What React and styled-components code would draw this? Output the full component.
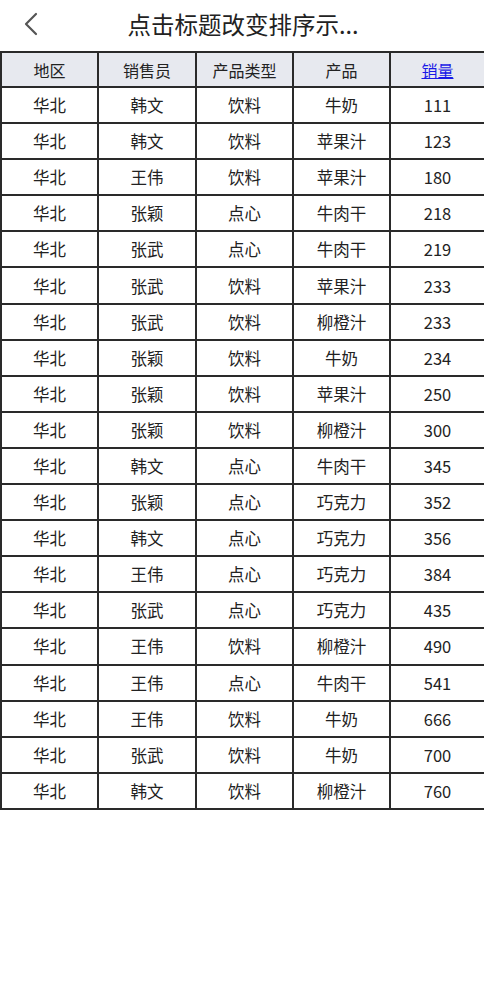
import React, { useState } from "react";
import styled, { createGlobalStyle } from "styled-components";

const GlobalStyle = createGlobalStyle`
  body {
    margin: 0;
    background: #fff;
    font-family: "Noto Sans CJK SC", "Noto Sans", sans-serif;
    color: #222;
  }
`;

const Page = styled.div`
  width: 484px;
  min-height: 1004px;
  background: #fff;
`;

const NavBar = styled.div`
  height: 51px;
  display: flex;
  align-items: center;
  position: relative;
`;

const BackButton = styled.button`
  position: absolute;
  left: 18px;
  top: 10px;
  width: 26px;
  height: 28px;
  border: none;
  background: none;
  padding: 0;
  display: flex;
  align-items: center;
  justify-content: center;
  cursor: pointer;
`;

const Title = styled.div`
  flex: 1;
  text-align: center;
  font-size: 23.5px;
  line-height: 30px;
  margin-top: -3px;
  padding-left: 2px;
  color: #222;
`;

const Table = styled.table`
  width: 100%;
  border-collapse: collapse;
  table-layout: fixed;
  border: 2px solid #2a2a2a;
`;

const Col = styled.col`
  width: ${(p) => p.$w}px;
`;

const HeadCell = styled.th`
  background: #e7e9ef;
  border: 2px solid #2a2a2a;
  height: 33px;
  padding: 0;
  font-size: 16px;
  font-weight: normal;
  color: ${(p) => (p.$active ? "#1a1ae6" : "#222")};
  text-decoration: ${(p) => (p.$active ? "underline" : "none")};
  cursor: pointer;
`;

const Cell = styled.td`
  border: 2px solid #2a2a2a;
  height: 34.1px;
  padding: 0;
  text-align: center;
  font-size: 16.5px;
  color: #222;
`;

const columns = [
  { key: "region", label: "地区", width: 97 },
  { key: "seller", label: "销售员", width: 98 },
  { key: "type", label: "产品类型", width: 97 },
  { key: "product", label: "产品", width: 97 },
  { key: "sales", label: "销量", width: 95 },
];

const rows = [
  ["华北", "韩文", "饮料", "牛奶", 111],
  ["华北", "韩文", "饮料", "苹果汁", 123],
  ["华北", "王伟", "饮料", "苹果汁", 180],
  ["华北", "张颖", "点心", "牛肉干", 218],
  ["华北", "张武", "点心", "牛肉干", 219],
  ["华北", "张武", "饮料", "苹果汁", 233],
  ["华北", "张武", "饮料", "柳橙汁", 233],
  ["华北", "张颖", "饮料", "牛奶", 234],
  ["华北", "张颖", "饮料", "苹果汁", 250],
  ["华北", "张颖", "饮料", "柳橙汁", 300],
  ["华北", "韩文", "点心", "牛肉干", 345],
  ["华北", "张颖", "点心", "巧克力", 352],
  ["华北", "韩文", "点心", "巧克力", 356],
  ["华北", "王伟", "点心", "巧克力", 384],
  ["华北", "张武", "点心", "巧克力", 435],
  ["华北", "王伟", "饮料", "柳橙汁", 490],
  ["华北", "王伟", "点心", "牛肉干", 541],
  ["华北", "王伟", "饮料", "牛奶", 666],
  ["华北", "张武", "饮料", "牛奶", 700],
  ["华北", "韩文", "饮料", "柳橙汁", 760],
];

const App = () => {
  const [sortCol, setSortCol] = useState(4);

  const sorted = [...rows].sort((a, b) => {
    const x = a[sortCol];
    const y = b[sortCol];
    if (typeof x === "number") return x - y;
    return String(x).localeCompare(String(y), "zh");
  });

  return (
    <Page>
      <GlobalStyle />
      <NavBar>
        <BackButton aria-label="返回">
          <svg width="16" height="24" viewBox="0 0 16 24" fill="none">
            <path d="M13 2 L3 12 L13 22" stroke="#555" strokeWidth="2.2" strokeLinecap="round" strokeLinejoin="round" />
          </svg>
        </BackButton>
        <Title>点击标题改变排序示...</Title>
      </NavBar>
      <Table>
        <colgroup>
          {columns.map((c) => (
            <Col key={c.key} $w={c.width} />
          ))}
        </colgroup>
        <thead>
          <tr>
            {columns.map((c, i) => (
              <HeadCell key={c.key} $active={i === sortCol} onClick={() => setSortCol(i)}>
                {c.label}
              </HeadCell>
            ))}
          </tr>
        </thead>
        <tbody>
          {sorted.map((r, i) => (
            <tr key={i}>
              {r.map((v, j) => (
                <Cell key={j}>{v}</Cell>
              ))}
            </tr>
          ))}
        </tbody>
      </Table>
    </Page>
  );
};

export default App;
